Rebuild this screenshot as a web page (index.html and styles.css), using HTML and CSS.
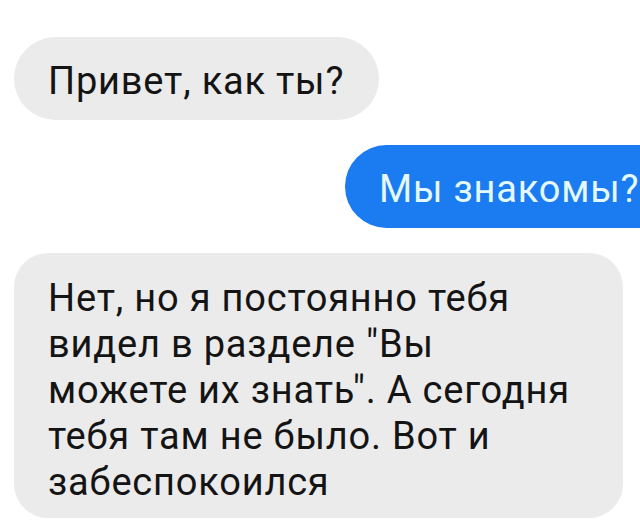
FILE: index.html
```html
<!DOCTYPE html>
<html lang="ru">
<head>
    <meta charset="UTF-8">
    <title>Чат</title>
    <link rel="stylesheet" href="styles.css">
</head>
<body>

<div class="chat">
    <div class="msg msg-in msg-short">Привет, как ты?</div>

    <div class="msg msg-out">Мы знакомы?</div>

    <div class="msg msg-in msg-long">
        Нет, но я постоянно тебя<br>
        видел в разделе "Вы<br>
        можете их знать". А сегодня<br>
        тебя там не было. Вот и<br>
        забеспокоился
    </div>
</div>

</body>
</html>
```

FILE: styles.css
```css
body {
    margin: 0;
    background-color: #ffffff;
    font-family: Roboto, "Liberation Sans", sans-serif;
    overflow: hidden;
}
.chat {
    display: flex;
    flex-direction: column;
    align-items: flex-start;
    gap: 25px;
    padding: 37px 0 0 14px;
}
.msg {
    font-size: 38px;
    letter-spacing: 0.8px;
    color: #141414;
    white-space: nowrap;
}
.msg-in {
    background-color: #ebebeb;
}
.msg-short {
    width: 365px;
    height: 83px;
    box-sizing: border-box;
    line-height: 83px;
    padding: 3px 0 0 34px;
    border-radius: 42px;
}
.msg-out {
    margin-left: 331px;
    height: 83px;
    box-sizing: border-box;
    line-height: 83px;
    padding: 3px 60px 0 34px;
    border-radius: 42px;
    background-color: #1a7cf0;
    color: #e4f8ff;
}
.msg-long {
    width: 609px;
    height: 265px;
    box-sizing: border-box;
    line-height: 46px;
    padding: 22px 30px 0 34px;
    border-radius: 34px;
}
```
